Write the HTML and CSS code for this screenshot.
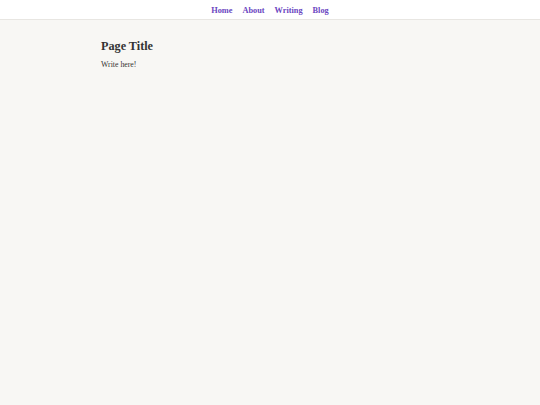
FILE: index.html
```html
<!DOCTYPE html>
<html>
<head>
<meta charset="utf-8">
<link rel="stylesheet" href="styles.css">
</head>
<body>
<header class="site-header">
  <nav class="nav">
    <a href="#">Home</a>
    <a href="#">About</a>
    <a href="#">Writing</a>
    <a href="#">Blog</a>
  </nav>
</header>
<main class="content">
  <h1 class="title">Page Title</h1>
  <p class="text">Write here!</p>
</main>
</body>
</html>
```
FILE: styles.css
```css
html, body {
  margin: 0;
  padding: 0;
  background: #f8f7f4;
  font-family: "Liberation Serif", Georgia, serif;
  color: #333;
  height: 100%;
}
.site-header {
  background: #fff;
  border-bottom: 1px solid #e8e6e2;
  height: 20px;
  box-sizing: border-box;
  display: flex;
  align-items: center;
  justify-content: center;
}
.nav {
  display: flex;
  gap: 10px;
  padding-top: 1px;
}
.nav a {
  color: #6b46c1;
  text-decoration: none;
  font-weight: bold;
  font-size: 8.3px;
}
.content {
  width: 338px;
  margin: 0 auto;
  padding-top: 19px;
}
.title {
  font-size: 12.2px;
  line-height: 15px;
  margin: 0 0 6px;
  color: #333;
}
.text {
  font-size: 7.8px;
  margin: 0;
}
```
